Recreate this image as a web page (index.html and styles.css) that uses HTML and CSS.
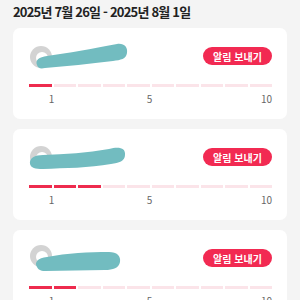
FILE: index.html
```html
<!DOCTYPE html>
<html lang="ko">
<head>
    <meta charset="UTF-8">
    <meta name="viewport" content="width=device-width, initial-scale=1.0">
    <title>알림 보내기</title>
    <link rel="stylesheet" href="styles.css">
</head>
<body>
    <h1 class="period">2025년 7월 26일 - 2025년 8월 1일</h1>

    <div class="card">
        <div class="card-head">
            <div class="user">
                <svg class="avatar" width="100" height="30" viewBox="0 0 100 30">
                    <circle cx="12" cy="16" r="11" fill="#d3d3d3"/>
                    <circle cx="13" cy="17" r="6" fill="#fff"/>
                    <path d="M8 24 C6 19 10 16 18 15 C40 12 62 8 88 3 C95 2 99 6 98 12 C97 18 92 19 84 20 C60 23 38 25 16 27 C11 28 9 27 8 24 Z" fill="#72bcc0"/>
                </svg>
            </div>
            <button class="notify">알림 보내기</button>
        </div>
        <div class="bar">
            <span class="seg on"></span><span class="seg"></span><span class="seg"></span><span class="seg"></span><span class="seg"></span>
            <span class="seg"></span><span class="seg"></span><span class="seg"></span><span class="seg"></span><span class="seg"></span>
        </div>
        <div class="ticks">
            <span class="tick t1">1</span>
            <span class="tick t5">5</span>
            <span class="tick t10">10</span>
        </div>
    </div>

    <div class="card">
        <div class="card-head">
            <div class="user">
                <svg class="avatar" width="100" height="30" viewBox="0 0 100 30">
                    <circle cx="12" cy="15" r="11" fill="#d3d3d3"/>
                    <circle cx="13" cy="16" r="6" fill="#fff"/>
                    <path d="M1 22 C0 16 6 13 14 13 C36 12 58 11 80 7 C90 4 97 6 96 13 C96 19 90 21 82 22 C60 26 36 26 14 27 C6 27 2 26 1 22 Z" fill="#72bcc0"/>
                </svg>
            </div>
            <button class="notify">알림 보내기</button>
        </div>
        <div class="bar">
            <span class="seg on"></span><span class="seg on"></span><span class="seg on"></span><span class="seg"></span><span class="seg"></span>
            <span class="seg"></span><span class="seg"></span><span class="seg"></span><span class="seg"></span><span class="seg"></span>
        </div>
        <div class="ticks">
            <span class="tick t1">1</span>
            <span class="tick t5">5</span>
            <span class="tick t10">10</span>
        </div>
    </div>

    <div class="card">
        <div class="card-head">
            <div class="user">
                <svg class="avatar" width="100" height="30" viewBox="0 0 100 30">
                    <circle cx="12" cy="13" r="11" fill="#d3d3d3"/>
                    <circle cx="13" cy="14" r="6" fill="#fff"/>
                    <path d="M8 24 C5 19 9 15 18 14 C38 10 60 9 80 9 C88 9 92 13 91 19 C90 25 84 27 76 27 C56 27 36 28 16 28 C11 28 9 26 8 24 Z" fill="#72bcc0"/>
                </svg>
            </div>
            <button class="notify">알림 보내기</button>
        </div>
        <div class="bar">
            <span class="seg on"></span><span class="seg on"></span><span class="seg"></span><span class="seg"></span><span class="seg"></span>
            <span class="seg"></span><span class="seg"></span><span class="seg"></span><span class="seg"></span><span class="seg"></span>
        </div>
        <div class="ticks">
            <span class="tick t1">1</span>
            <span class="tick t5">5</span>
            <span class="tick t10">10</span>
        </div>
    </div>
</body>
</html>
```

FILE: styles.css
```css
/* Reset básico */
body, h1, button {
    margin: 0;
    padding: 0;
    box-sizing: border-box;
}

body {
    font-family: "Noto Sans CJK KR", "Noto Sans", sans-serif;
    background: #f4f4f4;
    color: #222;
    padding: 0 13px;
    overflow: hidden;
}

/* Período */
.period {
    font-size: 13px;
    font-weight: 700;
    line-height: 24px;
    height: 24px;
    letter-spacing: -0.8px;
}

/* Cartão */
.card {
    margin-top: 4px;
    margin-bottom: 10px;
    background: #fff;
    border-radius: 7px;
    padding: 14px 15px 13px 16px;
}

.card-head {
    display: flex;
    justify-content: space-between;
    align-items: center;
    height: 28px;
}

.user {
    display: flex;
    align-items: center;
}

.avatar {
    display: block;
}

.notify {
    border: none;
    background: #f22a52;
    color: #fff;
    font-family: inherit;
    font-size: 10px;
    font-weight: 700;
    height: 18px;
    width: 69px;
    border-radius: 9px;
    cursor: pointer;
}

/* Barra de progresso */
.bar {
    display: grid;
    grid-template-columns: repeat(10, 1fr);
    gap: 2px;
    margin-top: 14px;
    height: 3px;
}

.seg {
    background: #fbe4e9;
}

.seg.on {
    background: #ee2b4e;
}

.ticks {
    display: grid;
    grid-template-columns: repeat(10, 1fr);
    column-gap: 2px;
    margin-top: 5px;
    font-size: 10px;
    line-height: 14px;
    color: #666;
}

.tick {
    justify-self: end;
}

.t1 {
    grid-column: 1;
    transform: translateX(50%);
}

.t5 {
    grid-column: 5;
    transform: translateX(50%);
}

.t10 {
    grid-column: 10;
}
```
